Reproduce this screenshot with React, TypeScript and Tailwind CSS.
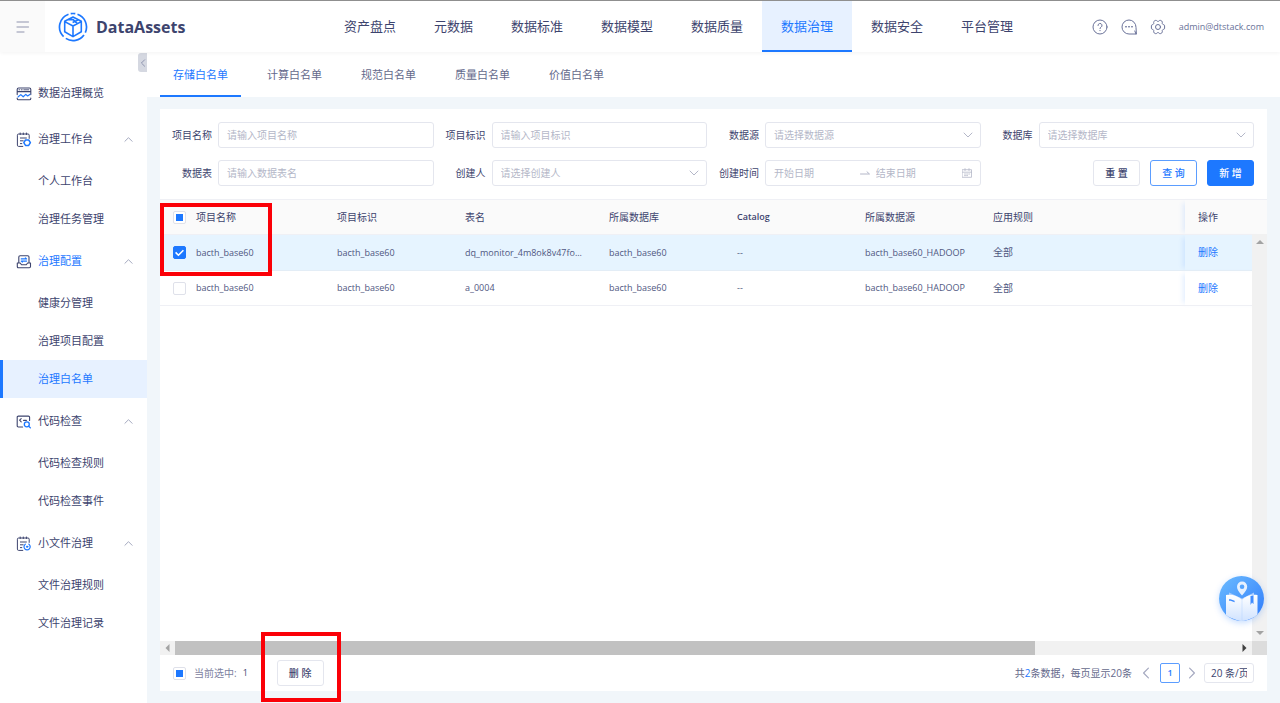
import { useState, type ReactNode } from 'react';

const topNav = ['资产盘点', '元数据', '数据标准', '数据模型', '数据质量', '数据治理', '数据安全', '平台管理'];
const tabs = ['存储白名单', '计算白名单', '规范白名单', '质量白名单', '价值白名单'];

const rows = [
  { id: 1, project: 'bacth_base60', ident: 'bacth_base60', table: 'dq_monitor_4m8ok8v47fo...', db: 'bacth_base60', catalog: '--', source: 'bacth_base60_HADOOP', rule: '全部' },
  { id: 2, project: 'bacth_base60', ident: 'bacth_base60', table: 'a_0004', db: 'bacth_base60', catalog: '--', source: 'bacth_base60_HADOOP', rule: '全部' },
];

const line = { fill: 'none', stroke: 'currentColor', strokeLinecap: 'round', strokeLinejoin: 'round' } as const;

function OverviewIcon() {
  return (
    <svg viewBox="0 0 16 16" className="size-4 shrink-0" {...line} strokeWidth="1.1">
      <path d="M1.2 8.6V3.4c0-.9.5-1.4 1.4-1.4h10.800c.9 0 1.4.5 1.4 1.4v5.200M1.2 5.6h13.600M1.2 12v.4c0 .9.5 1.4 1.4 1.4h10.800c.9 0 1.4-.5 1.4-1.4V12" />
      <path d="M3 3.800h.8M5.400 3.800h.8M7.800 3.800h5" strokeWidth=".9" />
      <path d="M2.200 10.800l2.600-2.200 2.400 2.200 2.600-2.400 1.800 1.600 2.200-1.600" stroke="#1d78ff" strokeWidth="1.200" />
    </svg>
  );
}

function WorkbenchIcon() {
  return (
    <svg viewBox="0 0 16 16" className="size-4 shrink-0" {...line} strokeWidth="1">
      <path d="M6.800 14.400H2.600c-.8 0-1.200-.4-1.200-1.200V3.200c0-.8.4-1.200 1.200-1.200H12c.8 0 1.200.4 1.200 1.200v3.200M4.200 1v1.600M7.300 1v1.600M10.400 1v1.600M4.400 6h6M4.400 8.800h2.800M4.400 11.600h1.400" />
      <path d="M9.500 8h3.200l1.700 2.700-1.700 2.700H9.500l-1.700-2.700z" stroke="#1d78ff" strokeWidth="1.500" />
    </svg>
  );
}

function ConfigIcon() {
  return (
    <svg viewBox="0 0 16 16" className="size-4 shrink-0" {...line} strokeWidth="1.1">
      <path d="M2.800 8.400V3c0-.8.5-1.300 1.300-1.300h7.600c.8 0 1.300.5 1.300 1.300v5.400M1.300 9h2.900l1.300 1.800h4.800L11.600 9h2.900v3.600c0 .8-.4 1.200-1.200 1.200H2.500c-.8 0-1.200-.4-1.200-1.200z" />
      <path d="M5.200 4.900h5.400L9.400 3.900M10.600 7.100H5.200l1.200 1" stroke="#1d78ff" />
    </svg>
  );
}

function CodeIcon() {
  return (
    <svg viewBox="0 0 16 16" className="size-4 shrink-0" {...line} strokeWidth="1.1">
      <path d="M6.600 13H2.400c-.8 0-1.200-.4-1.200-1.200V3.300c0-.8.4-1.200 1.200-1.200h10c.8 0 1.200.4 1.200 1.200v3.200M5.200 4.600L3.600 6.200l1.600 1.600M7.600 6.400h2.800" />
      <circle cx="10.800" cy="10.300" r="2.500" stroke="#1d78ff" strokeWidth="1.300" />
      <path d="M12.700 12.200l1.700 1.700" stroke="#1d78ff" strokeWidth="1.300" />
    </svg>
  );
}

function FileIcon() {
  return (
    <svg viewBox="0 0 16 16" className="size-4 shrink-0" {...line} strokeWidth="1">
      <path d="M6.800 14.400H2.600c-.8 0-1.200-.4-1.200-1.200V3.200c0-.8.4-1.200 1.200-1.200H12c.8 0 1.200.4 1.200 1.200v3.200M4.200 1v1.600M7.300 1v1.600M10.400 1v1.600M4.400 6h6M4.400 8.800h2.800M4.400 11.600h1.400" />
      <path d="M9.300 8.200a3.100 3.100 0 1 0 3.600 0" stroke="#1d78ff" strokeWidth="1.200" />
      <circle cx="11.100" cy="10.700" r=".7" stroke="#1d78ff" fill="#1d78ff" />
    </svg>
  );
}

const menu: { label: string; icon: ReactNode; active?: boolean; children: string[] }[] = [
  { label: '数据治理概览', icon: <OverviewIcon />, children: [] },
  { label: '治理工作台', icon: <WorkbenchIcon />, children: ['个人工作台', '治理任务管理'] },
  { label: '治理配置', icon: <ConfigIcon />, active: true, children: ['健康分管理', '治理项目配置', '治理白名单'] },
  { label: '代码检查', icon: <CodeIcon />, children: ['代码检查规则', '代码检查事件'] },
  { label: '小文件治理', icon: <FileIcon />, children: ['文件治理规则', '文件治理记录'] },
];

function Logo() {
  return (
    <svg viewBox="0 0 30 30" className="size-[30px]" fill="none" stroke="#1d78ff" strokeLinejoin="round">
      <path d="M10.500 2.200A13.500 13.500 0 0 0 5.600 24.600M7.800 26.400A13.500 13.500 0 0 0 26 23M27.300 20.600A13.500 13.500 0 0 0 19.500 2.300M17.300 1.700A13.500 13.500 0 0 0 12.700 1.700" strokeWidth="1.700" />
      <path d="M15 5l8.300 4.300v10.400L15 24.600l-8.300-4.900V9.300zM6.700 9.600L15 14l8.300-4.400M15 14v10.400M9.800 7.800l5.400-.2 4 4M14.600 10.400l5.800-2.600" strokeWidth="1.600" />
    </svg>
  );
}

function HelpIcon() {
  return (
    <svg viewBox="0 0 16 16" className="size-4" {...line}>
      <circle cx="8" cy="8" r="7" />
      <path d="M6 6.500a2 2 0 1 1 3 1.700c-.7.400-1 .7-1 1.400M8 11.400v.300" />
    </svg>
  );
}

function ChatIcon() {
  return (
    <svg viewBox="0 0 16 16" className="size-4" {...line}>
      <path d="M15 8a7 7 0 1 0-7 7h7zM15 15l-1.200-3" />
      <path d="M4.800 7.800h.4M7.800 7.800h.4M10.800 7.800h.4" strokeWidth="1.500" />
    </svg>
  );
}

function GearIcon() {
  return (
    <svg viewBox="0 0 16 16" className="size-4" {...line}>
      <path d="M5.400 1.400c.7-.3 1.100 0 1.500.5.600.7 1.600.7 2.200 0 .4-.5.800-.8 1.500-.5l1.300.8c.6.400.6.900.4 1.500-.3.900.2 1.700 1.100 1.900.7.100 1.100.4 1.200 1.100v2.600c-.1.700-.5 1-1.200 1.100-.9.200-1.400 1-1.100 1.900.2.600.2 1.100-.4 1.500l-1.300.8c-.7.300-1.100 0-1.500-.5-.6-.7-1.600-.7-2.200 0-.4.500-.8.800-1.500.5l-1.300-.8c-.6-.4-.6-.9-.4-1.500.3-.9-.2-1.700-1.100-1.900-.7-.1-1.100-.4-1.200-1.100V6.700c.1-.7.500-1 1.200-1.100.9-.2 1.400-1 1.100-1.900-.2-.6-.2-1.100.4-1.500z" />
      <circle cx="8" cy="8" r="2.500" />
    </svg>
  );
}

function Chevron({ className }: { className: string }) {
  return (
    <svg viewBox="0 0 10 10" className={className} {...line}>
      <path d="M1 3l4 4 4-4" />
    </svg>
  );
}

function Tick({ label, state, onChange }: { label: string; state: 'on' | 'off' | 'some'; onChange?: () => void }) {
  return (
    <label className="relative block size-[13px] shrink-0">
      <input
        type="checkbox"
        aria-label={label}
        checked={state === 'on'}
        onChange={onChange ?? (() => undefined)}
        className="block size-[13px] appearance-none rounded-xs border border-[#dfe1ea] bg-white checked:border-[#1d78ff] checked:bg-[#1d78ff]"
      />
      {state === 'some' && <span className="pointer-events-none absolute inset-[3px] bg-[#1d78ff]" />}
      {state === 'on' && (
        <svg viewBox="0 0 13 13" className="pointer-events-none absolute inset-0" fill="none" stroke="#fff" strokeWidth="1.600">
          <path d="M2.600 6.400l2.800 2.800 5-5" />
        </svg>
      )}
    </label>
  );
}

const box = 'h-[26px] w-full rounded-[3px] border border-[#e4e6ee] bg-white text-[10px] text-[#b4b7c8]';

function Field({ id, label, children }: { id: string; label: string; children: ReactNode }) {
  return (
    <div className="flex items-center">
      <label htmlFor={id} className="w-[58px] shrink-0 pr-[6px] text-right text-[10px]">{label}</label>
      <div className="relative min-w-0 flex-1">{children}</div>
    </div>
  );
}

function TextField({ id, label, hint }: { id: string; label: string; hint: string }) {
  return (
    <Field id={id} label={label}>
      <input id={id} placeholder={hint} className={`${box} block px-2 placeholder:text-[#b4b7c8]`} />
    </Field>
  );
}

function SelectField({ id, label, hint }: { id: string; label: string; hint: string }) {
  return (
    <Field id={id} label={label}>
      <select id={id} className={`${box} block appearance-none px-2`}>
        <option>{hint}</option>
      </select>
      <Chevron className="pointer-events-none absolute top-2 right-2 size-[10px] text-[#b4b7c8]" />
    </Field>
  );
}

const button = 'h-[26px] w-[47px] rounded-[3px] border text-[10px] font-medium';

export default function App() {
  const [checked, setChecked] = useState<number[]>([1]);
  const toggle = (id: number) => setChecked((c) => (c.includes(id) ? c.filter((x) => x !== id) : [...c, id]));
  const all = checked.length === 0 ? 'off' : checked.length === rows.length ? 'on' : 'some';

  return (
    <div className="relative flex min-h-screen flex-col bg-[#f1f6fa] font-['Open_Sans','Noto_Sans_CJK_SC',sans-serif] text-[#3d446e]">
      <header className="z-10 flex h-[52px] shrink-0 border-t border-[#8f8f8f] bg-white shadow-[0_1px_4px_rgba(0,0,0,0.05)]">
        <div className="flex w-[325px] shrink-0 items-center">
          <button aria-label="菜单" className="flex h-full w-[45px] items-center bg-[#fafafa] pl-4 text-[#b4b7c8]">
            <svg viewBox="0 0 14 12" className="h-3 w-[14px]" {...line} strokeWidth="1.300">
              <path d="M1 1h11.500M1 6h11.500M1 11h7" />
            </svg>
          </button>
          <a href="#home" className="ml-[13px] flex items-center gap-2 text-[16px] font-bold">
            <Logo />
            DataAssets
          </a>
        </div>
        <nav className="flex text-[13px]">
          {topNav.map((item) => (
            <a
              key={item}
              href={`#${item}`}
              className={
                item === '数据治理'
                  ? 'flex items-center border-b-2 border-[#1d78ff] bg-[#e7f1ff] px-[19px] pt-[3px] whitespace-nowrap text-[#1d78ff]'
                  : 'flex items-center border-b-2 border-transparent px-[19px] pt-[3px] whitespace-nowrap'
              }
            >
              {item}
            </a>
          ))}
        </nav>
        <div className="ml-auto flex items-center gap-[13px] pr-4 text-[#6a7299]">
          <button aria-label="帮助"><HelpIcon /></button>
          <button aria-label="消息"><ChatIcon /></button>
          <button aria-label="设置"><GearIcon /></button>
          <span className="text-[9px]">admin@dtstack.com</span>
        </div>
      </header>

      <div className="flex flex-1">
        <aside className="relative w-[147px] shrink-0 bg-white pt-[19px] text-[11px]">
          <button aria-label="收起" className="absolute top-px right-0 flex h-[19px] w-[9px] items-center justify-center rounded-l-[3px] bg-[#d5d8e1] text-[#7d84a3]">
            <Chevron className="size-2 rotate-90" />
          </button>
          <ul className="flex flex-col gap-px">
            {menu.map((group) => (
              <li key={group.label}>
                <button className="flex h-[45px] w-full items-center gap-[6px] pr-[14px] pl-4">
                  {group.icon}
                  <span className={group.active ? 'text-[#1d78ff]' : ''}>{group.label}</span>
                  {group.children.length > 0 && <Chevron className="ml-auto size-[9px] rotate-180 text-[#9a9fb8]" />}
                </button>
                {group.children.map((child) => (
                  <a
                    key={child}
                    href={`#${child}`}
                    className={
                      child === '治理白名单'
                        ? 'flex h-[38px] items-center border-l-[3px] border-[#1d78ff] bg-[#e7f1ff] pl-[35px] text-[#1d78ff]'
                        : 'flex h-[38px] items-center border-l-[3px] border-transparent pl-[35px]'
                    }
                  >
                    {child}
                  </a>
                ))}
              </li>
            ))}
          </ul>
        </aside>

        <main className="flex min-w-0 flex-1 flex-col">
          <div className="flex h-[45px] shrink-0 gap-[13px] bg-white px-[13px] text-[11px] text-[#64698b]">
            {tabs.map((tab, i) => (
              <a
                key={tab}
                href={`#${tab}`}
                className={
                  i === 0
                    ? 'flex items-center border-b-2 border-[#1d78ff] px-[13px] pt-[3px] text-[#1d78ff]'
                    : 'flex items-center border-b-2 border-transparent px-[13px] pt-[3px]'
                }
              >
                {tab}
              </a>
            ))}
          </div>

          <section className="mx-[13px] my-3 flex flex-1 flex-col bg-white">
            <form className="grid grid-cols-4 gap-y-3 py-[13px] pr-[13px]" onSubmit={(e) => e.preventDefault()}>
              <TextField id="project" label="项目名称" hint="请输入项目名称" />
              <TextField id="ident" label="项目标识" hint="请输入项目标识" />
              <SelectField id="source" label="数据源" hint="请选择数据源" />
              <SelectField id="db" label="数据库" hint="请选择数据库" />
              <TextField id="table" label="数据表" hint="请输入数据表名" />
              <SelectField id="creator" label="创建人" hint="请选择创建人" />
              <Field id="start" label="创建时间">
                <div className={`${box} flex items-center px-2`}>
                  <input id="start" placeholder="开始日期" className="w-0 min-w-0 flex-1 placeholder:text-[#b4b7c8]" />
                  <svg viewBox="0 0 10 10" className="mr-[6px] size-[10px]" {...line}>
                    <path d="M.5 6h9L7 3.800" />
                  </svg>
                  <input aria-label="结束日期" placeholder="结束日期" className="w-0 min-w-0 flex-1 placeholder:text-[#b4b7c8]" />
                  <svg viewBox="0 0 10 10" className="size-[10px]" {...line} strokeWidth=".8">
                    <path d="M.5 1.700h9v7.600h-9zM.5 4.200h9M3 .6v2M7 .6v2M2.500 6h1M4.600 6h1M6.700 6h1M2.500 7.600h1M4.600 7.600h1" />
                  </svg>
                </div>
              </Field>
              <div className="flex justify-end gap-[10px]">
                <button type="reset" className={`${button} border-[#e4e6ee] bg-white`}>重 置</button>
                <button type="submit" className={`${button} border-[#5b9dff] bg-white text-[#1d78ff]`}>查 询</button>
                <button type="button" className={`${button} border-[#1d78ff] bg-[#1d78ff] text-white`}>新 增</button>
              </div>
            </form>

            <div className="relative flex-1">
              <table className="w-full table-fixed text-left text-[9px] text-[#50577f]">
                <colgroup>
                  <col className="w-[36px]" />
                  <col className="w-[128px]" />
                  <col className="w-[128px]" />
                  <col className="w-[144px]" />
                  <col className="w-[128px]" />
                  <col className="w-[128px]" />
                  <col className="w-[128px]" />
                  <col />
                  <col className="w-[82px]" />
                </colgroup>
                <thead>
                  <tr className="h-[35px] border-y border-[#eff0f5] bg-[#fafafa] text-[10px] text-[#3d446e] *:p-0 *:font-normal">
                    <th><div className="pl-[13px]"><Tick label="全选" state={all} /></div></th>
                    <th>项目名称</th>
                    <th><div className="pl-[13px]">项目标识</div></th>
                    <th><div className="pl-[13px]">表名</div></th>
                    <th><div className="pl-[13px]">所属数据库</div></th>
                    <th><div className="pl-[13px] text-[9px] font-semibold">Catalog</div></th>
                    <th><div className="pl-[13px]">所属数据源</div></th>
                    <th><div className="pl-[13px]">应用规则</div></th>
                    <th className="shadow-[-5px_0_5px_-3px_rgba(29,120,255,0.12)]"><div className="pl-[13px]">操作</div></th>
                  </tr>
                </thead>
                <tbody>
                  {rows.map((row) => (
                    <tr
                      key={row.id}
                      className={
                        checked.includes(row.id)
                          ? 'h-[36px] border-b border-[#e3edf6] bg-[#e6f4ff] *:p-0'
                          : 'h-[35px] border-b border-[#eff0f5] *:p-0'
                      }
                    >
                      <td>
                        <div className="pl-[13px]">
                          <Tick label={`选择 ${row.table}`} state={checked.includes(row.id) ? 'on' : 'off'} onChange={() => toggle(row.id)} />
                        </div>
                      </td>
                      <td>{row.project}</td>
                      <td><div className="pl-[13px]">{row.ident}</div></td>
                      <td><div className="pl-[13px] whitespace-nowrap">{row.table}</div></td>
                      <td><div className="pl-[13px]">{row.db}</div></td>
                      <td><div className="pl-[13px]">{row.catalog}</div></td>
                      <td><div className="pl-[13px]">{row.source}</div></td>
                      <td><div className="pl-[13px] text-[10px]">{row.rule}</div></td>
                      <td className="shadow-[-5px_0_5px_-3px_rgba(29,120,255,0.12)]">
                        <button className="pl-[13px] text-[10px] text-[#1d78ff]">删除</button>
                      </td>
                    </tr>
                  ))}
                </tbody>
              </table>
              <div className="absolute top-[35px] right-0 bottom-0 flex w-[15px] flex-col items-center justify-between bg-[#f1f1f1] py-[6px] text-[#a3a3a3]">
                <svg viewBox="0 0 8 4" className="h-1 w-2" fill="currentColor"><path d="M0 4l4-4 4 4z" /></svg>
                <svg viewBox="0 0 8 4" className="h-1 w-2" fill="currentColor"><path d="M0 0l4 4 4-4z" /></svg>
              </div>
              <div className="pointer-events-none absolute top-1 left-0 h-[73px] w-[112px] border-4 border-[#fb0007]" />
            </div>

            <div className="flex h-[14px] shrink-0 items-center bg-[#f1f1f1]">
              <svg viewBox="0 0 4 8" className="mx-[5px] h-2 w-[5px] text-[#a3a3a3]" fill="currentColor"><path d="M4 0v8L0 4z" /></svg>
              <div className="flex h-full flex-1">
                <div className="h-full w-[81%] bg-[#c1c1c1]" />
              </div>
              <svg viewBox="0 0 4 8" className="mx-[5px] h-2 w-[5px] text-[#404040]" fill="currentColor"><path d="M0 0v8l4-4z" /></svg>
              <div className="h-full w-[15px] bg-[#dcdcdc]" />
            </div>

            <footer className="relative flex h-9 shrink-0 items-center px-[13px] text-[10px]">
              <Tick label="选择当前页" state={all} />
              <span className="ml-2 text-[#7d82a0]">当前选中:</span>
              <span className="ml-[6px] w-[34px] text-[9px]">{checked.length}</span>
              <button className={`${button} border-[#e4e6ee] bg-white`}>删 除</button>
              <div className="ml-auto flex items-center text-[#64698b]">
                <span>共<span className="text-[#1d78ff]">2</span>条数据，每页显示20条</span>
                <button aria-label="上一页" className="mx-2"><Chevron className="size-3 rotate-90 text-[#a5a9c0]" /></button>
                <button className="h-5 w-5 rounded-xs border border-[#5b9dff] text-[9px] font-semibold text-[#1d78ff]">1</button>
                <button aria-label="下一页" className="mx-[6px]"><Chevron className="size-3 -rotate-90 text-[#a5a9c0]" /></button>
                <select aria-label="每页条数" className="h-5 w-[50px] appearance-none rounded-[3px] border border-[#e4e6ee] bg-white px-[6px] text-[#3d446e]">
                  <option>20 条/页</option>
                </select>
              </div>
              <div className="pointer-events-none absolute -top-[23px] left-[101px] h-[70px] w-[80px] border-4 border-[#fb0007]" />
            </footer>
          </section>
        </main>
      </div>

      <button aria-label="使用指引" className="absolute right-4 bottom-[82px] size-[45px] rounded-full shadow-[0_2px_6px_rgba(29,120,255,0.25)]">
        <svg viewBox="0 0 45 45" className="size-[45px]">
          <defs>
            <linearGradient id="disc" x1="0" y1="0" x2="1" y2="1">
              <stop offset="0" stopColor="#6cbcff" />
              <stop offset="1" stopColor="#2f7bfb" />
            </linearGradient>
            <linearGradient id="page" x1="0" y1="0" x2="0" y2="1">
              <stop offset="0" stopColor="#fff" />
              <stop offset="1" stopColor="#cfe2ff" />
            </linearGradient>
            <clipPath id="round"><circle cx="22.500" cy="22.500" r="22.500" /></clipPath>
          </defs>
          <circle cx="22.500" cy="22.500" r="22.500" fill="url(#disc)" />
          <g clipPath="url(#round)">
            <path d="M10 16.500l13 6 12-6v23l-12 6-13-6z" fill="#a9cdff" />
            <path d="M7 19c6-1 11 .5 15.800 4.500V46L7 40z" fill="url(#page)" />
            <path d="M38.500 19c-6-1-11 .5-15.300 4.500V46l15.300-6z" fill="url(#page)" />
            <path d="M10 23.200c2 0 4 .6 5.600 1.500v1.600c-1.700-.9-3.600-1.500-5.600-1.500z" fill="#3f8cff" />
            <path d="M31.500 20l3-.8v9l-1.500-1.700-1.500 2.500z" fill="#3f8cff" />
          </g>
          <path fillRule="evenodd" d="M23 19.500c-3.200-3.800-5-6-5-8.800a5 5 0 0 1 10.200 0c0 2.800-2 5-5.200 8.800zM23 8.500a2.300 2.300 0 1 0 .1 4.600 2.300 2.300 0 0 0-.1-4.600z" fill="#e6f1ff" />
        </svg>
      </button>
    </div>
  );
}
